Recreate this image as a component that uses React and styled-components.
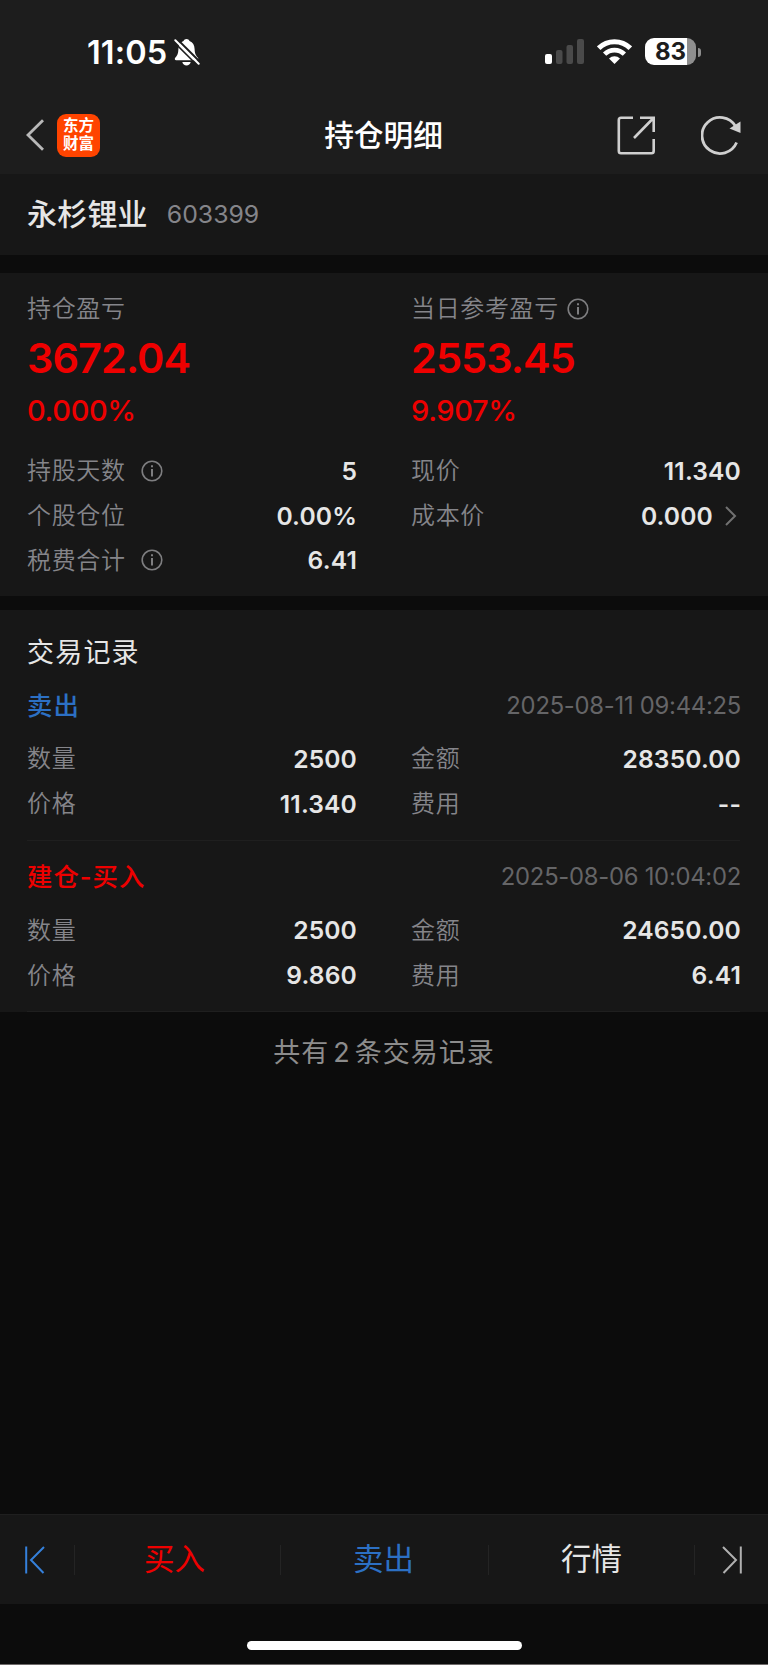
import React from 'react';
import styled, { createGlobalStyle } from 'styled-components';

const colors = {
    header: '#1d1d1d',
    panel: '#171717',
    page: '#0c0c0c',
    line: '#1f1f1f',
    white: '#ffffff',
    text: '#e6e6e6',
    label: '#85858a',
    date: '#656567',
    icon: '#cfcfcf',
    red: '#ee0000',
    blue: '#2c70c4',
};

const GlobalStyle = createGlobalStyle`
    * {
        box-sizing: border-box;
    }
    body {
        margin: 0;
        background: ${colors.page};
        font-family: Inter, "Noto Sans CJK SC", sans-serif;
        -webkit-font-smoothing: antialiased;
    }
    svg {
        display: block;
        flex: none;
    }
`;

const Container = styled.div`
    width: 768px;
    height: 1665px;
    display: flex;
    flex-direction: column;
    background: ${colors.page};
    border-bottom: 1px solid #6e6a6a;
    overflow: hidden;
    white-space: nowrap;
`;

const Header = styled.header`
    height: 174px;
    flex: none;
    background: ${colors.header};
`;

const StatusBar = styled.div`
    height: 104px;
    display: flex;
    align-items: center;
    justify-content: space-between;
    padding: 0 67px 0 87px;
`;

const StatusGroup = styled.div`
    display: flex;
    align-items: center;
`;

const Time = styled.span`
    width: 87px;
    padding-top: 2px;
    color: ${colors.white};
    font-size: 32.5px;
    font-weight: 600;
    line-height: 40px;
    letter-spacing: 0.1px;
`;

const SignalIcon = styled.svg`
    margin: 0 13px 2px 0;
`;

const WifiIcon = styled.svg`
    margin: 0 13px 1px 0;
`;

const Battery = styled.div`
    width: 51px;
    height: 27px;
    margin-bottom: 1px;
    border-radius: 9px;
    display: flex;
    align-items: center;
    justify-content: center;
    background: linear-gradient(90deg, ${colors.white} 42px, #8e8e8e 42px);
    color: ${colors.header};
    font-size: 24px;
    font-weight: 700;
    line-height: 27px;
`;

const BatteryCap = styled.div`
    width: 3px;
    height: 9px;
    margin: 0 0 0 2px;
    border-radius: 0 4px 4px 0;
    background: #8e8e8e;
`;

const Navbar = styled.nav`
    height: 62px;
    display: grid;
    grid-template-columns: 1fr auto 1fr;
    align-items: center;
    padding: 0 27px 0 26px;
`;

const NavSide = styled.div`
    display: flex;
    align-items: center;
    justify-content: ${(props) => (props.$end ? 'flex-end' : 'flex-start')};
    gap: ${(props) => (props.$end ? '45px' : '13px')};
`;

const Logo = styled.div`
    width: 43px;
    height: 43px;
    border-radius: 9px;
    display: grid;
    align-content: center;
    justify-items: center;
    background: #ff4400;
    color: ${colors.white};
    font-family: "Liberation Sans", "Noto Sans CJK SC", sans-serif;
    font-size: 15.5px;
    font-weight: 700;
    line-height: 18px;
`;

const Title = styled.h1`
    margin: 0;
    color: ${colors.white};
    font-size: 29.7px;
    font-weight: 500;
    line-height: 40px;
`;

const StockBar = styled.section`
    height: 81px;
    flex: none;
    display: flex;
    align-items: center;
    gap: 19px;
    padding: 0 27px 1px;
    background: ${colors.panel};
`;

const StockName = styled.span`
    color: ${colors.text};
    font-size: 30px;
    font-weight: 500;
    line-height: 40px;
    letter-spacing: 0.2px;
`;

const StockCode = styled.span`
    color: ${colors.label};
    font-size: 24.8px;
    line-height: 40px;
`;

const Summary = styled.section`
    height: 323px;
    flex: none;
    margin-top: 18px;
    padding: 13px 28px 0 27px;
    background: ${colors.panel};
`;

const Columns = styled.div`
    display: grid;
    grid-template-columns: 329px 329px;
    column-gap: 55px;
`;

const ProfitBlock = styled.div`
    height: 162.5px;
    color: ${colors.red};
`;

const Profit = styled.div`
    margin-top: 2px;
    font-size: 41.5px;
    font-weight: 600;
    line-height: 50px;
    letter-spacing: -0.95px;
`;

const Rate = styled.div`
    margin-top: 8px;
    font-size: 29px;
    font-weight: 500;
    line-height: 40px;
    letter-spacing: -0.35px;
`;

const Cell = styled.div`
    height: 44.7px;
    display: flex;
    align-items: center;
    justify-content: space-between;
`;

const Label = styled.span`
    display: flex;
    align-items: center;
    gap: ${(props) => props.$gap || '15px'};
    color: ${colors.label};
    font-size: 24px;
    font-weight: 350;
    line-height: 45px;
    letter-spacing: 0.65px;
`;

const Value = styled.span`
    display: flex;
    align-items: center;
    gap: 12px;
    margin-right: -1px;
    color: ${colors.text};
    font-size: 24.6px;
    font-weight: 600;
    line-height: 44px;
    letter-spacing: 0.15px;
`;

const Records = styled.section`
    height: 402px;
    flex: none;
    margin-top: 14px;
    padding: 23px 28px 0 27px;
    background: ${colors.panel};
`;

const SectionTitle = styled.h2`
    margin: 0;
    color: ${colors.text};
    font-size: 27px;
    font-weight: 400;
    line-height: 39px;
    letter-spacing: 1.2px;
`;

const Record = styled.article`
    height: 171.5px;
    border-bottom: 1px solid ${colors.line};
    &:first-of-type {
        height: 168.5px;
    }
    &:first-of-type > header {
        height: 64.5px;
        padding-top: 3px;
    }
`;

const RecordHead = styled.header`
    height: 67.5px;
    display: flex;
    align-items: center;
    justify-content: space-between;
    padding-top: 5px;
`;

const Action = styled.span`
    color: ${(props) => props.$color};
    font-size: 25.4px;
    font-weight: 500;
    line-height: 40px;
    letter-spacing: 1px;
`;

const DateText = styled.span`
    margin-right: -1px;
    color: ${colors.date};
    font-size: 23.8px;
    line-height: 40px;
    letter-spacing: -0.25px;
`;

const Total = styled.p`
    flex: 1;
    margin: 0;
    padding-top: 21px;
    color: #8c8c8c;
    font-size: 27px;
    font-weight: 400;
    line-height: 40px;
    letter-spacing: 1px;
    word-spacing: -4.6px;
    text-align: center;
`;

const TabBar = styled.footer`
    height: 90px;
    flex: none;
    display: grid;
    grid-template-columns: 75px 206px 208px 206px 73px;
    align-items: center;
    background: ${colors.panel};
    border-top: 1px solid ${colors.line};
`;

const Tab = styled.div`
    height: 30px;
    display: flex;
    align-items: center;
    justify-content: center;
    border-right: ${(props) => (props.$last ? 'none' : '1px solid #242424')};
    padding: ${(props) => props.$pad || '0 6px 2px 0'};
    color: ${(props) => props.$color};
    font-size: 30.5px;
    line-height: 40px;
`;

const HomeArea = styled.div`
    height: 60px;
    flex: none;
    display: flex;
    justify-content: center;
    padding-top: 37px;
`;

const HomeIndicator = styled.div`
    width: 275px;
    height: 9px;
    border-radius: 5px;
    background: ${colors.white};
`;

const InfoIcon = () => (
    <svg width="22" height="22" viewBox="0 0 22 22" fill="none" stroke="#7e7e80" strokeWidth="1.6">
        <circle cx="11" cy="11" r="9.8" />
        <path d="M11 9v7.5M11 5.3v2" strokeWidth="2" />
    </svg>
);

const BellOff = () => (
    <svg width="26" height="28" viewBox="0 0 26 28">
        <path d="M12.5 1C11 1 10 1.800 9.500 3C6 4.200 4.600 7 4.400 11C4.200 15.500 3.600 17.200 1.400 19.500C.3 20.800.7 22.200 2.200 22.200H23C24.300 22.200 24.700 20.800 23.800 19.500C21.600 17.200 20.800 15.500 20.600 11C20.400 7 19 4.200 15.500 3C15 1.800 14 1 12.500 1Z" fill="#fff" />
        <path d="M8.300 24H16.700C16.200 26.200 14.600 27.400 12.500 27.400S8.800 26.200 8.300 24Z" fill="#fff" />
        <path d="M3 1L26 24" stroke={colors.header} strokeWidth="2" />
        <path d="M0 4L23 27" stroke={colors.header} strokeWidth="1.600" />
        <path d="M1.300 2.300L24.700 25.700" stroke="#fff" strokeWidth="2" strokeLinecap="round" />
    </svg>
);

const Pair = ({ label, value, info, arrow }) => (
    <Cell>
        <Label>
            {label}
            {info && <InfoIcon />}
        </Label>
        <Value>
            {value}
            {arrow && (
                <svg width="16" height="20" viewBox="0 0 16 20" fill="none" stroke="#717171" strokeWidth="2">
                    <path d="M1 1L10 10L1 19" />
                </svg>
            )}
        </Value>
    </Cell>
);

const records = [
    {
        action: '卖出',
        color: colors.blue,
        date: '2025-08-11 09:44:25',
        cells: [['数量', '2500'], ['金额', '28350.00'], ['价格', '11.340'], ['费用', '--']],
    },
    {
        action: '建仓-买入',
        color: colors.red,
        date: '2025-08-06 10:04:02',
        cells: [['数量', '2500'], ['金额', '24650.00'], ['价格', '9.860'], ['费用', '6.41']],
    },
];

const App = () => {
    return (
        <Container>
            <GlobalStyle />
            <Header>
                <StatusBar>
                    <StatusGroup>
                        <Time>11:05</Time>
                        <BellOff />
                    </StatusGroup>
                    <StatusGroup>
                        <SignalIcon width="39" height="25" viewBox="0 0 39 25">
                            <rect x="0" y="15" width="7" height="10" rx="2" fill="#fff" />
                            <rect x="11" y="11" width="6.500" height="14" rx="2" fill="#4a4a4a" />
                            <rect x="21.500" y="6" width="6.500" height="19" rx="2" fill="#4a4a4a" />
                            <rect x="32" y="0" width="7" height="25" rx="2" fill="#4a4a4a" />
                        </SignalIcon>
                        <WifiIcon width="35" height="25" viewBox="0 0 35 25" fill="none" stroke="#fff">
                            <path d="M1.700 9.200A22.500 22.500 0 0 1 33.300 9.200" strokeWidth="5" />
                            <path d="M7.600 15.200A14 14 0 0 1 27.400 15.200" strokeWidth="4.600" />
                            <path d="M17.500 25L12 19.500A8 8 0 0 1 23 19.500Z" fill="#fff" stroke="none" />
                        </WifiIcon>
                        <Battery>83</Battery>
                        <BatteryCap />
                    </StatusGroup>
                </StatusBar>
                <Navbar>
                    <NavSide>
                        <svg width="18" height="32" viewBox="0 0 18 32" fill="none" stroke="#b9b9b9" strokeWidth="2.800">
                            <path d="M17 1.200L2 16L17 30.800" />
                        </svg>
                        <Logo>
                            <span>东方</span>
                            <span>财富</span>
                        </Logo>
                    </NavSide>
                    <Title>持仓明细</Title>
                    <NavSide $end>
                        <svg width="39" height="39" viewBox="0 0 39 39" fill="none" stroke={colors.icon} strokeWidth="2.600">
                            <path d="M16 1.800H4Q1.800 1.800 1.800 4V35Q1.800 37.200 4 37.200H34.500Q36.700 37.200 36.700 35V23" />
                            <path d="M23 1.800H36.700V16M36 2.500L17 22" />
                        </svg>
                        <svg width="40" height="39" viewBox="0 0 40 39" fill="none" stroke={colors.icon} strokeWidth="2.800">
                            <path d="M35.600 26.500A18 18 0 1 1 34.500 10.300" />
                            <path d="M39.500 5.500V17L28.500 12.500Z" fill={colors.icon} stroke="none" />
                        </svg>
                    </NavSide>
                </Navbar>
            </Header>

            <StockBar>
                <StockName>永杉锂业</StockName>
                <StockCode>603399</StockCode>
            </StockBar>

            <Summary>
                <Columns>
                    <ProfitBlock>
                        <Label>持仓盈亏</Label>
                        <Profit>3672.04</Profit>
                        <Rate>0.000%</Rate>
                    </ProfitBlock>
                    <ProfitBlock>
                        <Label $gap="8px">
                            当日参考盈亏
                            <InfoIcon />
                        </Label>
                        <Profit>2553.45</Profit>
                        <Rate>9.907%</Rate>
                    </ProfitBlock>
                    <Pair label="持股天数" value="5" info />
                    <Pair label="现价" value="11.340" />
                    <Pair label="个股仓位" value="0.00%" />
                    <Pair label="成本价" value="0.000" arrow />
                    <Pair label="税费合计" value="6.41" info />
                </Columns>
            </Summary>

            <Records>
                <SectionTitle>交易记录</SectionTitle>
                {records.map((record) => (
                    <Record key={record.date}>
                        <RecordHead>
                            <Action $color={record.color}>{record.action}</Action>
                            <DateText>{record.date}</DateText>
                        </RecordHead>
                        <Columns>
                            {record.cells.map(([label, value]) => (
                                <Pair key={label} label={label} value={value} />
                            ))}
                        </Columns>
                    </Record>
                ))}
            </Records>

            <Total>共有 2 条交易记录</Total>

            <TabBar>
                <Tab $color={colors.blue} $pad="0 5px 0 0">
                    <svg width="20" height="28" viewBox="0 0 20 28" fill="none" stroke="#3580db" strokeWidth="2">
                        <path d="M1.200 0.500V27.500M19 1L6 14L18.500 27" />
                    </svg>
                </Tab>
                <Tab $color={colors.red}>买入</Tab>
                <Tab $color={colors.blue} $pad="0 2px 2px 0">卖出</Tab>
                <Tab $color={colors.text} $pad="0 0 2px">行情</Tab>
                <Tab $color={colors.icon} $pad="0" $last>
                    <svg width="20" height="28" viewBox="0 0 20 28" fill="none" stroke="#b0b0b0" strokeWidth="2">
                        <path d="M18.800 0.500V27.500M1 1L14 14L1.500 27" />
                    </svg>
                </Tab>
            </TabBar>
            <HomeArea>
                <HomeIndicator />
            </HomeArea>
        </Container>
    );
};

export default App;
